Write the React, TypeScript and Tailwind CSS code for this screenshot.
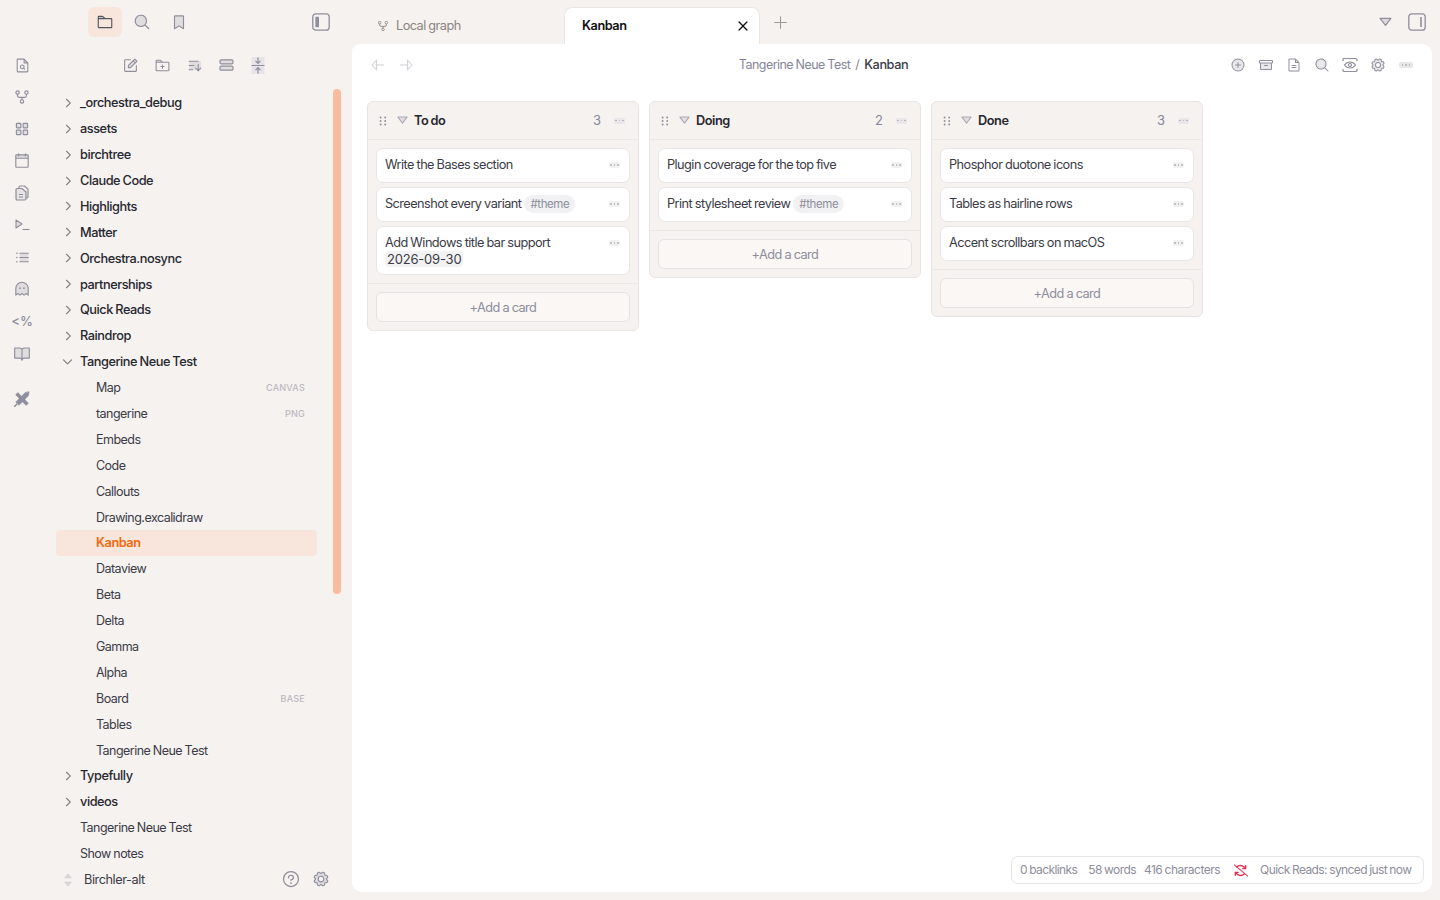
import React from "react";
import {
  PiFolderDuotone, PiMagnifyingGlassDuotone, PiBookmarkSimpleDuotone,
  PiNotePencilDuotone, PiFolderPlusDuotone, PiSortAscendingDuotone, PiSquaresFourDuotone,
  PiCalendarBlankDuotone, PiListBulletsDuotone, PiGhostDuotone, PiBookOpenDuotone,
  PiPlusCircleDuotone, PiArchiveDuotone, PiFileTextDuotone, PiGearDuotone, PiQuestion,
  PiFileMagnifyingGlassDuotone, PiCaretRightBold, PiCaretDownBold, PiXBold, PiPlus,
  PiArrowsClockwiseBold,
} from "react-icons/pi";

const ic = "text-[#8e8e9c]";

function Fork({ s = 18, c = "#8e8e9c" }: { s?: number; c?: string }) {
  return (
    <svg width={s} height={s} viewBox="0 0 18 18" fill="none" stroke={c} strokeWidth="1.3">
      <circle cx="4" cy="4" r="1.9" />
      <circle cx="14" cy="4" r="1.9" />
      <circle cx="9" cy="14" r="1.9" />
      <path d="M4 6v1.5a2 2 0 0 0 2 2h6a2 2 0 0 0 2-2V6M9 9.5V12" />
    </svg>
  );
}
function Tri({ s = 11, c = "#a9a9b4" }: { s?: number; c?: string }) {
  return (
    <svg width={s} height={s * 0.75} viewBox="0 0 12 9" fill={c} fillOpacity="0.25" stroke={c} strokeWidth="1.1" strokeLinejoin="round">
      <path d="M1 1.2h10L6 7.8z" />
    </svg>
  );
}
function Dots({ w = 12, light = false }: { w?: number; light?: boolean }) {
  return (
    <span className={`flex items-center justify-center gap-[2px] rounded-[2px] h-[6px] ${light ? "bg-[#f2f1f2]" : "bg-[#e8e6e8]"}`} style={{ width: w }}>
      {[0, 1, 2].map((i) => <span key={i} className="w-[1.5px] h-[1.5px] rounded-full bg-[#b0b0ba]" />)}
    </span>
  );
}
function Handle() {
  return (
    <svg width="8" height="10" viewBox="0 0 8 10" fill="#8e8e9c">
      {[1.5, 5, 8.5].map((y) => (
        <g key={y}>
          <circle cx="1.6" cy={y} r="0.95" />
          <circle cx="6.2" cy={y} r="0.95" />
        </g>
      ))}
    </svg>
  );
}
function Collapse() {
  return (
    <svg width="14" height="17" viewBox="0 0 14 17" fill="none" stroke="#8e8e9c" strokeWidth="1.2">
      <rect x="0.5" y="0" width="13" height="17" fill="#e6e4e6" stroke="none" />
      <path d="M7 0.5v5.5M4.5 3.8 7 6.3l2.5-2.5M7 16.5V11M4.5 13.2 7 10.7l2.5 2.5M0.5 8.5h13" />
    </svg>
  );
}
function Rows() {
  return (
    <svg width="15" height="12" viewBox="0 0 15 12" fill="#8e8e9c" fillOpacity="0.2" stroke="#8e8e9c" strokeWidth="1.2">
      <rect x="1" y="0.8" width="13" height="4" rx="1.3" />
      <rect x="1" y="7.2" width="13" height="4" rx="1.3" />
    </svg>
  );
}
function EyeScan() {
  return (
    <svg width="16" height="16" viewBox="0 0 16 16" fill="none" stroke="#8e8e9c" strokeWidth="1.2">
      <path d="M1 4V2.5A1 1 0 0 1 2 1.5h12a1 1 0 0 1 1 1V4M1 12v1.5a1 1 0 0 0 1 1h12a1 1 0 0 0 1-1V12" />
      <path d="M2.5 8C4 6 6 5 8 5s4 1 5.500 3C12 10 10 11 8 11s-4-1-5.500-3z" />
      <circle cx="8" cy="8" r="1.5" />
    </svg>
  );
}
function Term() {
  return (
    <svg width="15" height="12" viewBox="0 0 15 12" fill="none" stroke="#8e8e9c" strokeWidth="1.1">
      <path d="M1 1l6 4-6 4z" fill="#8e8e9c" fillOpacity="0.2" strokeLinejoin="round" />
      <path d="M7.500 10.500h7" />
    </svg>
  );
}
function Docs() {
  return (
    <svg width="14" height="16" viewBox="0 0 14 16" fill="none" stroke="#8e8e9c" strokeWidth="1.2" strokeLinejoin="round">
      <path d="M4 3V2.2A1.2 1.2 0 0 1 5.2 1h4.3L13 4.2v7.6a1.2 1.2 0 0 1-1.2 1.2H11" />
      <path d="M1 4.7A1.2 1.2 0 0 1 2.2 3.5H7L11 7v6.8A1.2 1.2 0 0 1 9.800 15H2.200A1.200 1.200 0 0 1 1 13.800z" fill="#8e8e9c" fillOpacity="0.15" />
      <path d="M4 9.500h4M4 12h4" />
    </svg>
  );
}
function Tools() {
  return (
    <svg width="16" height="16" viewBox="0 0 16 16" fill="#8e8e9c" stroke="#8e8e9c" strokeLinecap="round" strokeLinejoin="round">
      <path d="M2.600 2.600 13.400 13.400" strokeWidth="3.600" strokeLinecap="butt" />
      <path d="M15 1l-.6 3.800L5 14.200 1.800 11 11.200 1.600z" strokeWidth="0.600" />
      <path d="M3 13 .8 15.200" strokeWidth="1.600" />
    </svg>
  );
}
function SidebarR() {
  return (
    <svg width="18" height="18" viewBox="0 0 18 18" fill="none" stroke="#8e8e9c" strokeWidth="1.3">
      <rect x="0.8" y="0.8" width="16.4" height="16.4" rx="3" />
      <path d="M13 4v10" strokeWidth="1.6" />
    </svg>
  );
}
function SidebarL() {
  return (
    <svg width="18" height="18" viewBox="0 0 18 18" fill="none" stroke="#8e8e9c" strokeWidth="1.3">
      <rect x="0.8" y="0.8" width="16.4" height="16.4" rx="3" />
      <rect x="3.4" y="3.800" width="3.600" height="10.400" rx="0.800" fill="#8e8e9c" stroke="none" />
    </svg>
  );
}
function Arrow({ flip = false }: { flip?: boolean }) {
  return (
    <svg width="14" height="12" viewBox="0 0 14 12" fill="none" stroke="#d3d3d9" strokeWidth="1.100" strokeLinejoin="round" className={flip ? "scale-x-[-1]" : ""}>
      <path d="M5.500 1 1 6l4.500 5z" />
      <path d="M5.500 6H13" />
    </svg>
  );
}
function UpDown() {
  return (
    <svg width="8" height="14" viewBox="0 0 8 14" fill="#c6c4c5" stroke="#c6c4c5" strokeWidth="0.600" strokeLinejoin="round">
      <path d="M4 1 7.200 4.800H.8z" fillOpacity="0.500" />
      <path d="M4 13 .8 9.200h6.400z" fillOpacity="0.500" />
    </svg>
  );
}

type Row = { t: string; k: "f" | "o" | "c" | "r"; tag?: string; active?: boolean };
const rows: Row[] = [
  { t: "_orchestra_debug", k: "f" }, { t: "assets", k: "f" }, { t: "birchtree", k: "f" },
  { t: "Claude Code", k: "f" }, { t: "Highlights", k: "f" }, { t: "Matter", k: "f" },
  { t: "Orchestra.nosync", k: "f" }, { t: "partnerships", k: "f" }, { t: "Quick Reads", k: "f" },
  { t: "Raindrop", k: "f" }, { t: "Tangerine Neue Test", k: "o" },
  { t: "Map", k: "c", tag: "CANVAS" }, { t: "tangerine", k: "c", tag: "PNG" }, { t: "Embeds", k: "c" },
  { t: "Code", k: "c" }, { t: "Callouts", k: "c" }, { t: "Drawing.excalidraw", k: "c" },
  { t: "Kanban", k: "c", active: true }, { t: "Dataview", k: "c" }, { t: "Beta", k: "c" },
  { t: "Delta", k: "c" }, { t: "Gamma", k: "c" }, { t: "Alpha", k: "c" },
  { t: "Board", k: "c", tag: "BASE" }, { t: "Tables", k: "c" }, { t: "Tangerine Neue Test", k: "c" },
  { t: "Typefully", k: "f" }, { t: "videos", k: "f" },
  { t: "Tangerine Neue Test", k: "r" }, { t: "Show notes", k: "r" },
];

const txStrong = "text-[12.75px] tracking-[-0.45px] [word-spacing:-0.6px]";
const txTree = "text-[12.5px] tracking-[-0.53px] [word-spacing:-0.5px]";
const txCard = "text-[12.75px] tracking-[-0.56px] [word-spacing:-0.4px]";

function TreeRow({ r }: { r: Row }) {
  const folder = r.k === "f" || r.k === "o";
  return (
    <div className={`h-[25.9px] flex items-center rounded-[4px] pr-3 ${r.k === "c" ? "pl-10" : "pl-6"} relative ${r.active ? "bg-[#f8e6dc]" : ""}`}>
      {r.k === "f" && <PiCaretRightBold className="absolute left-[6px] text-[#85807d]" size={12} />}
      {r.k === "o" && <PiCaretDownBold className="absolute left-[5px] text-[#85807d]" size={13} />}
      <span className={`flex-1 ${r.active ? `${txStrong} text-[#f26a10] font-semibold` : folder ? `${txStrong} text-[#27272f] font-medium` : `${txTree} text-[#3b3b47] relative top-[1px]`}`}>{r.t}</span>
      {r.tag && <span className="text-[9px] font-medium tracking-[0.25px] text-[#b9b9c1]">{r.tag}</span>}
    </div>
  );
}

type Card = { t: string; tag?: string; date?: string };
type Col = { name: string; n: number; cards: Card[] };
const cols: Col[] = [
  { name: "To do", n: 3, cards: [{ t: "Write the Bases section" }, { t: "Screenshot every variant", tag: "#theme" }, { t: "Add Windows title bar support", date: "2026-09-30" }] },
  { name: "Doing", n: 2, cards: [{ t: "Plugin coverage for the top five" }, { t: "Print stylesheet review", tag: "#theme" }] },
  { name: "Done", n: 3, cards: [{ t: "Phosphor duotone icons" }, { t: "Tables as hairline rows" }, { t: "Accent scrollbars on macOS" }] },
];

function Column({ c }: { c: Col }) {
  return (
    <div className="w-[272px] border border-[#e9e4e3] rounded-[6px] bg-[#f6f2ef]">
      <div className="h-[38px] flex items-center pl-[11px] pr-[13px] border-b border-[#ece7e4]">
        <Handle />
        <span className="ml-[10px] flex"><Tri /></span>
        <span className={`ml-[6px] ${txStrong} font-semibold text-[#27272f] flex-1`}>{c.name}</span>
        <span className="text-[13px] text-[#85859a] mr-[13px]">{c.n}</span>
        <Dots w={11} />
      </div>
      <div className="p-[8px] flex flex-col gap-[4px] border-b border-[#ece7e4]">
        {c.cards.map((k) => (
          <div key={k.t} className="bg-white border border-[#e9e6e8] rounded-[7px] px-[8px] py-[7px] relative">
            <div className={`${txCard} leading-[18px] h-[19px] -mt-[1px] mb-[1px] text-[#3b3b47] flex items-center`}>
              <span>{k.t}</span>
              {k.tag && <span className="ml-[3px] px-[6px] rounded-full bg-[#f1f1f3] text-[#8e8e9c] text-[11.5px] tracking-[-0.4px] leading-[18px]">{k.tag}</span>}
            </div>
            {k.date && (
              <div className="h-[14px] text-[13px] tracking-[-0.2px] leading-[16px] text-[#3b3b47]">
                <span className="inline-block rounded-[4px] bg-[#f4f3f4] px-[2px] relative -top-[2px]">{k.date}</span>
              </div>
            )}
            <span className="absolute right-[9px] top-[13px]"><Dots w={11} light /></span>
          </div>
        ))}
      </div>
      <div className="p-[8px]">
        <div className={`h-[30px] pt-[2px] border border-[#e6e2e4] rounded-[6px] bg-[#faf7f5] flex items-center justify-center ${txCard} text-[#8e8e9c]`}>+Add a card</div>
      </div>
    </div>
  );
}

export default function App() {
  return (
    <div className="w-[1440px] h-[900px] overflow-hidden flex bg-[#f6f2ef] font-['Inter',sans-serif]">
      {/* ribbon */}
      <div className={`w-[44px] pt-[49px] flex flex-col items-center ${ic}`}>
        {[
          <PiFileMagnifyingGlassDuotone size={17} />, <Fork s={16} />, <PiSquaresFourDuotone size={18} />,
          <PiCalendarBlankDuotone size={18} />, <Docs />, <Term />,
          <PiListBulletsDuotone size={17} />, <PiGhostDuotone size={18} />,
          <span className="text-[13px] font-medium relative top-[1px] text-[#8e8e9c]">&lt;%</span>, <PiBookOpenDuotone size={18} />,
        ].map((x, i) => (
          <div key={i} className="h-[32px] flex items-center justify-center">{x}</div>
        ))}
        <div className="h-[32px] mt-[14px] flex items-center justify-center"><Tools /></div>
      </div>

      {/* sidebar */}
      <div className="w-[308px] flex flex-col relative">
        <div className="h-[44px] flex items-center pl-[44px] pr-[22px]">
          <div className="w-[34px] h-[30px] -mt-[1px] rounded-[6px] bg-[#f8e6dc] flex items-center justify-center"><PiFolderDuotone size={18} className="text-[#55555f]" /></div>
          <div className={`w-[37px] ml-[1px] flex justify-center ${ic}`}><PiMagnifyingGlassDuotone size={18} /></div>
          <div className={`w-[37px] flex justify-center ${ic}`}><PiBookmarkSimpleDuotone size={18} /></div>
          <div className="flex-1" />
          <SidebarL />
        </div>
        <div className={`h-[42px] flex items-center pl-[70px] ${ic}`}>
          {[<PiNotePencilDuotone size={17} />, <PiFolderPlusDuotone size={17} />, <PiSortAscendingDuotone size={17} />, <Rows />, <Collapse />].map((x, i) => (
            <div key={i} className="w-[32px] flex justify-center">{x}</div>
          ))}
        </div>
        <div className="pl-[12px] pr-[35px] pt-[3.9px]">
          {rows.map((r, i) => <TreeRow key={i} r={r} />)}
          <div className="h-[25.9px] flex items-center pl-[28px] relative">
            <span className="absolute left-[8px] flex"><UpDown /></span>
            <span className={`${txStrong} text-[#3b3b47] flex-1`}>Birchler-alt</span>
            <PiQuestion size={20} className="text-[#8e8e9c] absolute right-[16px] top-[2px]" />
            <PiGearDuotone size={18} className="text-[#8e8e9c] absolute -right-[13px] top-[3px]" />
          </div>
        </div>
        <div className="absolute left-[289px] top-[89px] w-[8px] h-[505px] rounded-full bg-[#f9bd9d]" />
      </div>

      {/* main */}
      <div className="w-[1088px] flex flex-col pr-[8px] pb-[8px]">
        <div className="h-[44px] flex items-end relative">
          <div className="w-[212px] h-[37px] flex items-center pl-[25px]">
            <Fork s={12} c="#8b8580" />
            <span className={`ml-[7px] ${txCard} text-[#8b8580]`}>Local graph</span>
          </div>
          <div className="w-[196px] h-[37px] bg-white rounded-t-[8px] border border-b-0 border-[#ebe6e6] flex items-center pl-[17px] pr-[9px]">
            <span className={`${txStrong} font-semibold text-[#111] flex-1`}>Kanban</span>
            <PiXBold size={14} className="text-[#111]" />
          </div>
          <PiPlus size={17} className="text-[#a09a97] ml-[12px] mb-[13px]" />
          <div className="flex-1" />
          <div className="mb-[17px] mr-[16px]"><Tri s={13} c="#8e8e9c" /></div>
          <div className="mb-[13px] mr-[6px]"><SidebarR /></div>
        </div>
        <div className="flex-1 bg-white rounded-[10px] rounded-tl-[8px] relative">
          <div className="h-[42px] flex items-center pl-[19px] pr-[19px]">
            <Arrow />
            <span className="ml-[14px]"><Arrow flip /></span>
            <div className="flex-1 text-center pl-[4px] leading-[18px] text-[13px] relative -top-[0.5px]">
              <span className={`${txTree} text-[#85859a]`}>Tangerine Neue Test</span>
              <span className={`${txTree} text-[#85859a] mx-[5px]`}>/</span>
              <span className={`${txStrong} text-[#3b3b47] font-medium`}>Kanban</span>
            </div>
            <div className={`flex items-center gap-[12px] ${ic}`}>
              <PiPlusCircleDuotone size={16} />
              <PiArchiveDuotone size={16} />
              <PiFileTextDuotone size={16} />
              <PiMagnifyingGlassDuotone size={16} />
              <EyeScan />
              <PiGearDuotone size={16} />
              <span className="ml-[1px]"><Dots w={14} /></span>
            </div>
          </div>
          <div className="pl-[15px] pt-[15px] flex items-start gap-[10px]">
            {cols.map((c) => <Column key={c.name} c={c} />)}
          </div>
          <div className="absolute right-[8px] bottom-[8px] h-[28px] w-[413px] bg-white border border-[#e6e4e8] rounded-[7px] flex items-center pl-[8px] text-[12px] tracking-[-0.6px] [word-spacing:-0.5px] text-[#8e8e9c] whitespace-nowrap">
            <span>0 backlinks</span>
            <span className="ml-[11px]">58 words</span>
            <span className="ml-[8px] tracking-[-0.5px]">416 characters</span>
            <span className="ml-[13px] relative flex items-center text-[#e5304f]">
              <PiArrowsClockwiseBold size={15} />
              <span className="absolute -left-[1px] top-[7px] w-[18px] h-[1.2px] rotate-[40deg] bg-[#e5304f]" />
            </span>
            <span className="ml-[12px]">Quick Reads: synced just now</span>
          </div>
        </div>
      </div>
    </div>
  );
}
